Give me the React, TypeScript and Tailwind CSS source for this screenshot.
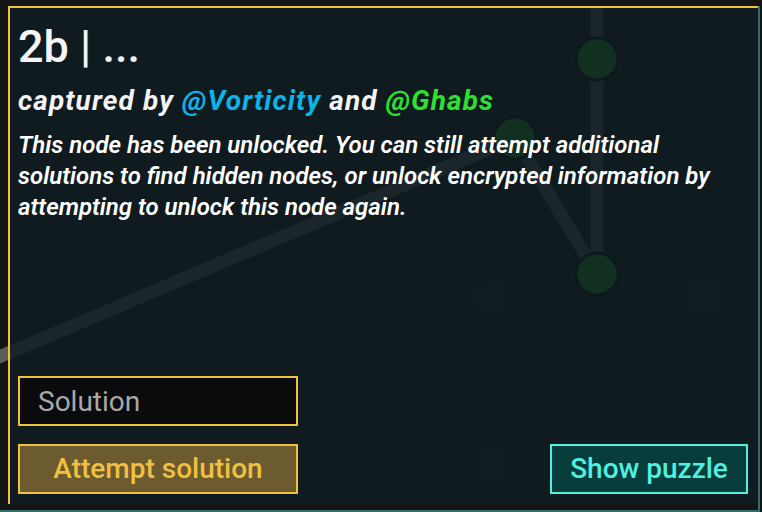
import React from "react";

function Graph() {
  return (
    <svg className="absolute inset-0" width="760" height="506" viewBox="0 0 760 506">
      {/* edges */}
      <g stroke="#5c5c5c" strokeWidth="13" fill="none">
        <line x1="597" y1="-20" x2="597" y2="268" />
        <line x1="515" y1="132" x2="597" y2="268" />
        <line x1="515" y1="132" x2="-100" y2="393" />
      </g>
      {/* faint nodes */}
      <g fill="#1c1c1c">
        <circle cx="490" cy="293" r="18" />
        <circle cx="703" cy="290" r="18" />
        <circle cx="493" cy="457" r="18" />
      </g>
      {/* captured nodes */}
      <g fill="#22a016" stroke="#0b0b0b" strokeWidth="3">
        <circle cx="597" cy="53" r="21" />
        <circle cx="515" cy="132" r="21" />
        <circle cx="597" cy="268" r="21" />
      </g>
    </svg>
  );
}

export default function App() {
  return (
    <div
      className="w-[762px] h-[512px] bg-[#141414] overflow-hidden"
      style={{ fontFamily: "Roboto, 'Noto Sans', sans-serif" }}
    >
      <div className="relative w-[760px] h-[506px] border-r-2 border-b-2 border-[#2f6b6f]">
        <Graph />
        <div className="relative ml-2 mt-[6px] h-[498px] border-l-2 border-t-2 border-[#f0c040] bg-[#0f1c22]/[0.85] flex flex-col px-2 pb-[10px] pr-[10px]">
          <h1 className="mt-[11px] text-[45px] leading-[56px] font-medium text-[#f4f4f4]">
            2b | ...
          </h1>
          <p className="mt-[10px] text-[28px] leading-[32px] font-bold italic text-[#f4f4f4] tracking-[0.04em]">
            captured by <span className="text-[#0db4ea]">@Vorticity</span> and{" "}
            <span className="text-[#2fe02f]">@Ghabs</span>
          </p>
          <p className="mt-[13px] text-[24px] leading-[31px] font-semibold italic text-white">
            This node has been unlocked. You can still attempt additional
            <br />
            solutions to find hidden nodes, or unlock encrypted information by
            <br />
            attempting to unlock this node again.
          </p>

          <div className="mt-auto flex items-end justify-between">
            <div className="flex flex-col gap-[18px]">
              <input
                type="text"
                placeholder="Solution"
                className="w-[280px] h-[50px] border-2 border-[#f0c040] bg-[#0b0b0d] px-[18px] text-[28px] text-[#a8a8a8] placeholder:text-[#a8a8a8] outline-none"
              />
              <button className="w-[280px] h-[50px] border-2 border-[#f0c040] bg-[#6b5b2e] text-[28px] font-medium text-[#f0c040]">
                Attempt solution
              </button>
            </div>
            <button className="w-[198px] h-[50px] border-2 border-[#4ff0e0] bg-[#073d3b] text-[28px] font-medium text-[#4ff0e0]">
              Show puzzle
            </button>
          </div>
        </div>
      </div>
    </div>
  );
}
